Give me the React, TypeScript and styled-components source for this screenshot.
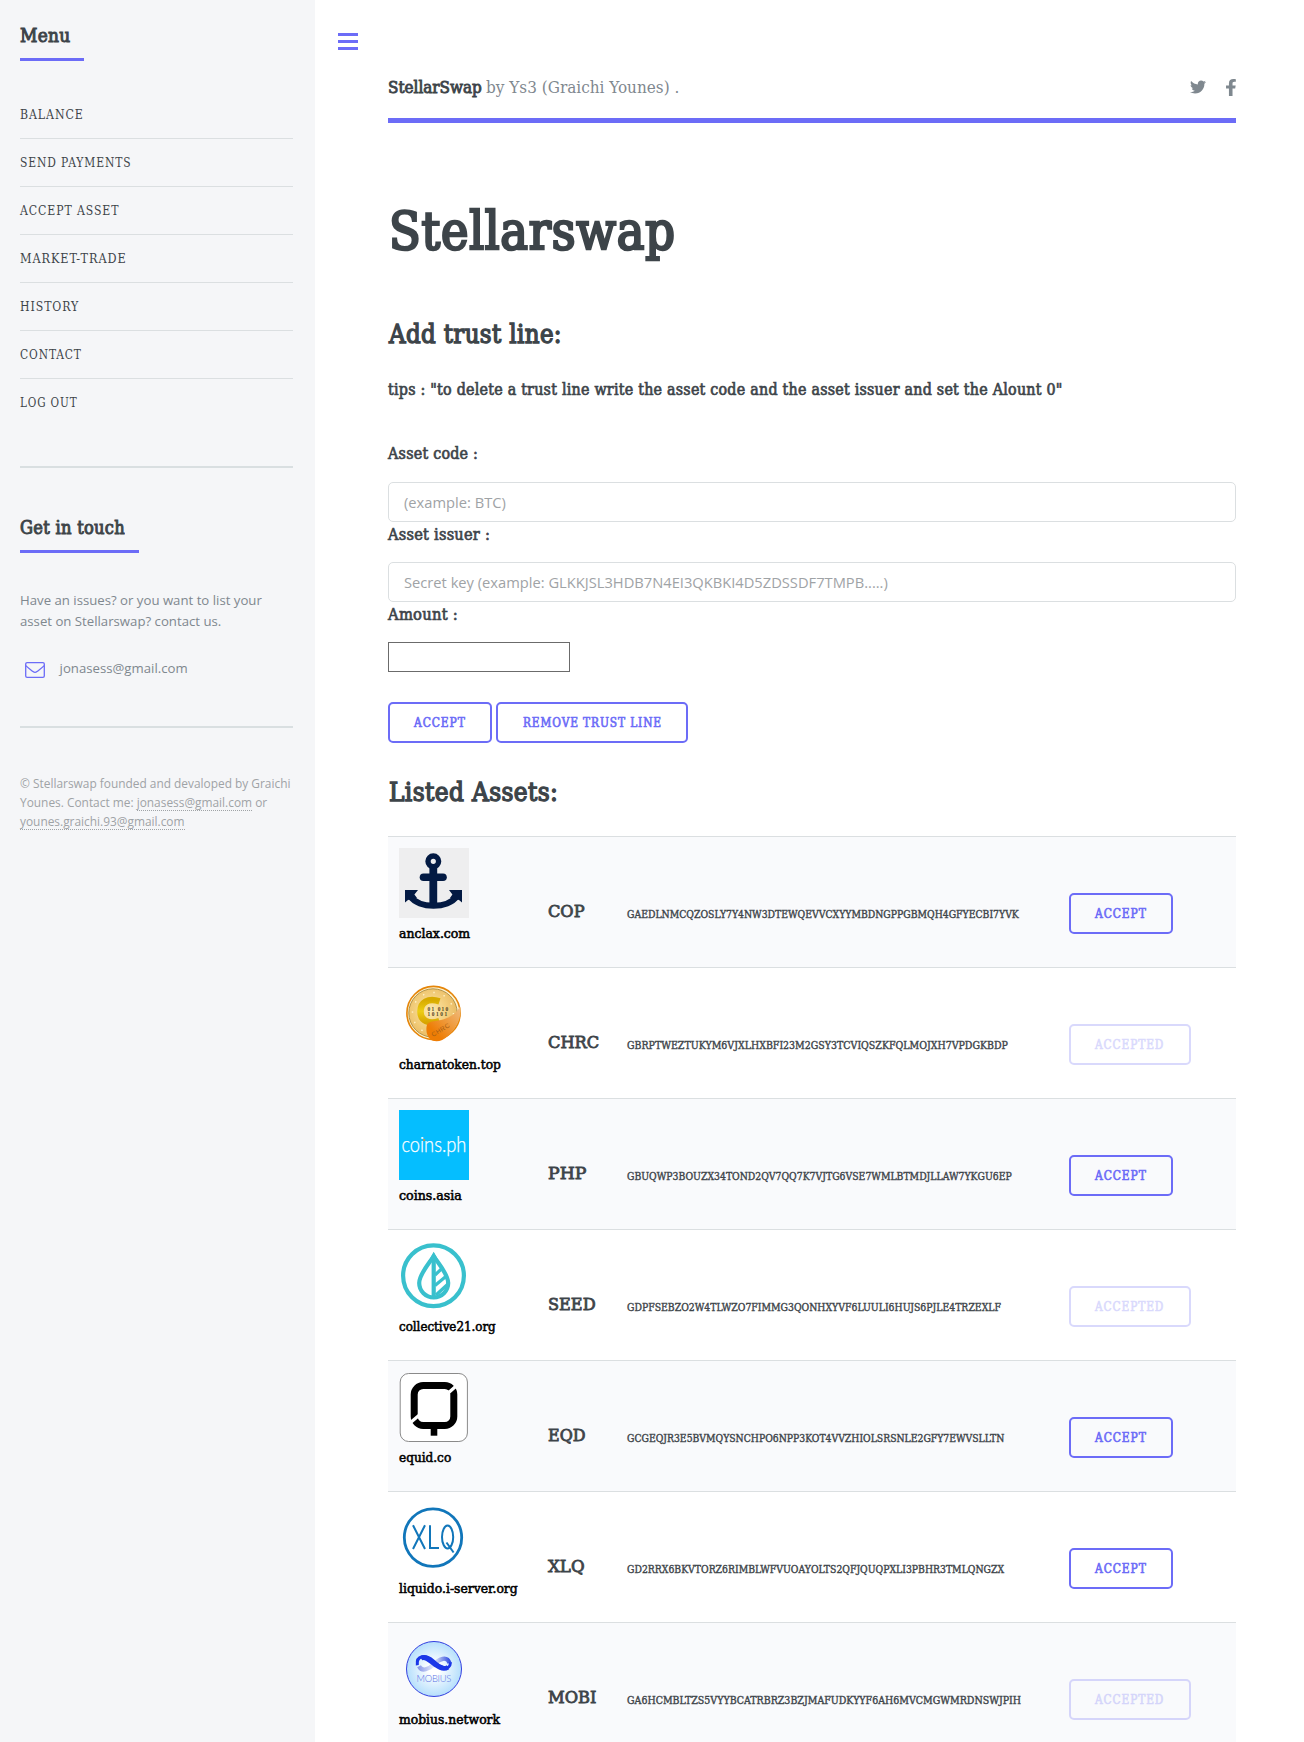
import React, { ReactNode, useLayoutEffect, useRef, useState } from 'react';
import styled, { createGlobalStyle, css } from 'styled-components';
import { FaTwitter } from 'react-icons/fa';

const accent = '#6c6cf7';
const ink = '#3d4449';
const muted = '#7f888f';
const rule = '#dbdfe1';
const slab = "'DejaVu Serif Condensed', 'DejaVu Serif', serif";
const sans = "'Open Sans', 'Noto Sans', sans-serif";

const GlobalStyle = createGlobalStyle`
  *, *::before, *::after { box-sizing: border-box; }
  body { margin: 0; background: #fff; color: ${muted}; font-family: ${sans}; overflow: hidden; }
  h1, h2, h3, p, ul { margin: 0; padding: 0; font-weight: 400; }
  h1, h2, h3, li { font-family: ${slab}; }
  h1, h2, h3 { letter-spacing: 0.015em; }
`;

/* Condenses a line of slab text so that it fills a known measure. */
const Measure = styled.span<{ $width: number; $bold?: number }>`
  display: inline-block;
  width: ${(p) => p.$width}px;
  white-space: nowrap;
  text-align: left;
  ${(p) => p.$bold && css`text-indent: 0.02em;`}
`;
const Glyphs = styled.span<{ $bold?: number }>`
  display: inline-block;
  text-indent: 0;
  transform-origin: 0 50%;
  font-family: ${slab};
  ${(p) => p.$bold && css`-webkit-text-stroke: ${p.$bold}em currentColor;`}
`;
function Fit({ width, bold, children }: { width: number; bold?: number; children: ReactNode }) {
  const ref = useRef<HTMLSpanElement>(null);
  const [scale, setScale] = useState(1);
  useLayoutEffect(() => {
    if (ref.current) setScale(width / ref.current.offsetWidth);
  }, [width]);
  return (
    <Measure $width={width} $bold={bold}>
      <Glyphs ref={ref} $bold={bold} style={{ transform: `scaleX(${scale})` }}>{children}</Glyphs>
    </Measure>
  );
}

const Page = styled.div`
  display: flex;
  height: 1742px;
  overflow: hidden;
`;

/* Sidebar */
const Sidebar = styled.aside`
  flex: 0 0 315px;
  padding: 24px 22px 0 20px;
  background: #f5f6f8;
`;
const Section = styled.section`
  & + & { border-top: 2px solid #d9dfe1; margin-top: 48px; padding-top: 48px; }
`;
const MenuSection = styled(Section)`
  margin-bottom: -8px;
`;
const SideHeading = styled.h2<{ $width: number }>`
  width: ${(p) => p.$width}px;
  height: 37px;
  border-bottom: 3px solid ${accent};
  color: ${ink};
  font-size: 17.6px;
  line-height: 24px;
`;
const Menu = styled.ul`
  list-style: none;
  margin-top: 30px;
`;
const MenuItem = styled.li`
  height: 48px;
  border-bottom: 1px solid ${rule};
  color: ${ink};
  font-size: 12.8px;
  line-height: 48px;
  letter-spacing: 0.075em;
  &:last-child { height: 47px; border-bottom: 0; }
`;
const SideText = styled.p`
  margin-top: 37px;
  font-size: 13.2px;
  line-height: 21px;
`;
const Mail = styled.div`
  display: flex;
  gap: 14.6px;
  height: 21px;
  margin-top: 25px;
  padding-left: 5px;
  font-size: 13.2px;
  line-height: 22px;
  svg { margin-top: 5px; flex: none; }
`;
const Footer = styled(Section).attrs({ as: 'footer' })`
  && { padding-top: 46px; }
  color: #9fa3a6;
  font-size: 11.9px;
  line-height: 19px;
`;
const MailLink = styled.span`
  border-bottom: 1px dotted #9fa3a6;
`;

/* Main column */
const Main = styled.main`
  position: relative;
  flex: 1;
  padding: 0 68px 0 73px;
  color: ${ink};
  font-family: ${slab};
`;
const Toggle = styled.button`
  position: absolute;
  left: 23px;
  top: 33px;
  display: grid;
  gap: 4px;
  width: 20px;
  padding: 0;
  border: 0;
  background: none;
`;
const ToggleBar = styled.i`
  height: 3px;
  background: ${accent};
`;
const TopBar = styled.header`
  display: flex;
  justify-content: space-between;
  height: 123px;
  padding-top: 74px;
  border-bottom: 5px solid ${accent};
  color: ${muted};
  font-size: 16.2px;
  line-height: 26px;
`;
const Brand = styled.span`
  display: flex;
  gap: 4px;
  padding-top: 1px;
`;
const Strong = styled.strong`
  color: ${ink};
  font-weight: 400;
`;
const Social = styled.div`
  display: flex;
  gap: 20px;
  padding-top: 5px;
`;
const Title = styled.h1`
  height: 60px;
  margin-top: 78px;
  font-size: 52px;
  line-height: 60px;
`;
const Heading = styled.h2<{ $top: number }>`
  margin-top: ${(p) => p.$top}px;
  height: 40px;
  font-size: 25.8px;
  line-height: 40px;
`;
const Tips = styled.h3`
  height: 26px;
  margin: 23px 0 38px;
  font-size: 15.8px;
  line-height: 26px;
`;
const Label = styled.h3`
  height: 40px;
  font-size: 15.8px;
  line-height: 26px;
  &:first-child { height: 41px; }
`;
const Field = styled.input`
  display: block;
  width: 100%;
  height: 40px;
  padding: 0 15px;
  border: 1px solid ${rule};
  border-radius: 5px;
  background: #fff;
  font: 14.7px ${sans};
  &::placeholder { color: #9fa3a6; opacity: 1; }
`;
const AmountField = styled.input`
  display: block;
  width: 182px;
  height: 30px;
  border: 1px solid #6b6b6b;
  background: #fff;
`;
const Form = styled.form`
  margin: 0;
`;
const Actions = styled.div`
  display: flex;
  gap: 4px;
  margin-top: 30px;
`;
const Button = styled.button<{ $width: number }>`
  width: ${(p) => p.$width}px;
  height: 41px;
  padding: 0;
  border: 2px solid ${accent};
  border-radius: 5px;
  background: transparent;
  color: ${accent};
  font: 12.4px/37px ${slab};
  letter-spacing: 0.075em;
  &:disabled { opacity: 0.25; }
`;

/* Asset table */
const Assets = styled.div`
  margin-top: 24px;
`;
const Row = styled.div`
  display: grid;
  grid-template-columns: 149px 79px 442px 1fr;
  align-items: start;
  height: 131px;
  padding: 11px 0 0 11px;
  border-top: 1px solid ${rule};
  &:nth-child(odd) { background: #f9fafc; }
`;
const Issuer = styled.div`
  display: grid;
  gap: 6px;
  color: #000;
  font-size: 12.8px;
  line-height: 20px;
  svg { display: block; overflow: visible; }
`;
const Code = styled.div`
  padding-top: 51px;
  font-size: 17px;
  line-height: 24px;
`;
const Address = styled.div`
  padding-top: 57px;
  font-size: 10.7px;
  line-height: 20px;
`;
const RowAction = styled.div`
  padding-top: 45px;
`;

const Logo = ({ children }: { children: ReactNode }) => (
  <svg width="70" height="70" viewBox="0 0 70 70">{children}</svg>
);

const AnchorLogo = () => (
  <Logo>
    <rect width="70" height="70" fill="#eeeeef" />
    <g fill="none" stroke="#031a43">
      <circle cx="34.3" cy="13.3" r="5.3" strokeWidth="5.4" />
      <path d="M34.3 18V58" strokeWidth="7.8" />
      <path d="M24.5 29.3H44" strokeWidth="7.6" strokeLinecap="round" />
      <path d="M11 48C20 61 49 61 58 48" strokeWidth="6.2" />
    </g>
    <path d="M6 42H19L15.4 46.4L18 50L9 52L6 54.5ZM63 42H50L53.4 46.4L51 50L60 52L63 54.5Z" fill="#031a43" />
  </Logo>
);

const CharnaLogo = () => (
  <Logo>
    <defs>
      <radialGradient id="gold" cx="45%" cy="45%">
        <stop offset="0" stopColor="#fdeab0" />
        <stop offset="0.65" stopColor="#f3cf7e" />
        <stop offset="1" stopColor="#ecc06a" />
      </radialGradient>
      <linearGradient id="ribbon" x1="0" x2="1" y1="1" y2="0">
        <stop offset="0.25" stopColor="#ee7d05" />
        <stop offset="1" stopColor="#f0bd80" />
      </linearGradient>
      <linearGradient id="letter" x2="0" y2="1">
        <stop offset="0" stopColor="#d8aa00" />
        <stop offset="0.5" stopColor="#eccd14" />
        <stop offset="1" stopColor="#d8a400" />
      </linearGradient>
    </defs>
    <circle cx="34.5" cy="34" r="26.6" fill="#fff4cf" stroke="#e58509" strokeWidth="1.6" />
    <circle cx="34" cy="34" r="24.2" fill="url(#gold)" stroke="#a8893e" strokeWidth="0.9" />
    <circle cx="34" cy="34" r="20.5" fill="none" stroke="#fff0c4" strokeWidth="1.5" strokeDasharray="1.5 9.2" />
    <path d="M40.5 22.4C29 18.6 21.5 23.5 21.5 32.5S30 46 40.5 42" fill="none" stroke="url(#letter)" strokeWidth="6.6" />
    <g fontFamily="Liberation Serif, serif" fontSize="5.4" fontWeight="700" fill="#4e411c">
      <text x="28.6" y="32.2" textLength="20.5">01 010</text>
      <text x="28.6" y="37.2" textLength="19.5">10101</text>
    </g>
    <path d="M27.5 48C28 42 35 42.5 42 41C51 38.5 57 35 61 27.5C63.5 41 55 51 49 57C43 62.5 36 64 31 60C28 57 27 53 27.5 48Z" fill="url(#ribbon)" />
    <text transform="translate(34 58) rotate(-31)" fontFamily="Liberation Sans, sans-serif" fontSize="6.4" fill="#a65d13" textLength="20">CHRC</text>
  </Logo>
);

const CoinsLogo = () => (
  <Logo>
    <rect width="70" height="70" fill="#05beff" />
    <text x="2.4" y="42" fontFamily="Lato, sans-serif" fontWeight="300" fontSize="20.6" fill="#fff" stroke="#fff" strokeWidth="0.25" textLength="65" lengthAdjust="spacingAndGlyphs">coins.ph</text>
    <rect x="24" y="29" width="2" height="2" fill="#a99b5e" />
  </Logo>
);

const SeedLogo = () => (
  <Logo>
    <g fill="none" stroke="#39c0cd" strokeWidth="4.2">
      <circle cx="34.5" cy="34.7" r="30.4" />
      <path d="M34.7 15C30 23 20.2 33 20.2 42A14.5 14.4 0 0 0 49.2 42C49.2 33 39.4 23 34.7 15Z" />
      <path d="M34.7 16V56" />
      <path d="M36 34L43.5 27M36 44.5L48 34.5M37 54L49 43" strokeWidth="3.2" />
    </g>
    <path d="M34.7 11.3L40 20H29.4Z" fill="#39c0cd" />
  </Logo>
);

const EquidLogo = () => (
  <Logo>
    <rect x="1.2" y="1.5" width="67.2" height="68" rx="8.5" fill="#fff" stroke="#8a8a8a" strokeWidth="1" />
    <rect x="15.2" y="13.5" width="39.6" height="40" rx="9" fill="none" stroke="#000" strokeWidth="7" />
    <path d="M47.5 22.5L60 11.5M8 53.5L21 42.5" stroke="#fff" strokeWidth="3.2" />
    <path d="M35 55V63.7" stroke="#000" strokeWidth="6.6" />
  </Logo>
);

const XlqLogo = () => (
  <Logo>
    <circle cx="34" cy="34.6" r="28.7" fill="#fff" stroke="#1176ba" strokeWidth="2.8" />
    <g fill="none" stroke="#1176ba" strokeWidth="2">
      <path d="M14 22.3L26 46M26 22.3L14 46M31 22.3V45H40" />
      <ellipse cx="48.6" cy="34" rx="5.6" ry="11.4" />
      <path d="M47.5 39.5L54.6 49.5" />
    </g>
  </Logo>
);

const MobiusLogo = () => (
  <Logo>
    <defs>
      <radialGradient id="sky">
        <stop offset="0.2" stopColor="#fff" />
        <stop offset="1" stopColor="#b5dffc" />
      </radialGradient>
      <linearGradient id="loop">
        <stop offset="0" stopColor="#8d9be8" />
        <stop offset="0.45" stopColor="#dfe7fb" />
        <stop offset="0.6" stopColor="#c0caf0" />
        <stop offset="1" stopColor="#3550e2" />
      </linearGradient>
    </defs>
    <g transform="translate(0 -0.8)">
      <circle cx="35" cy="35.8" r="27.5" fill="url(#sky)" stroke="#343fe0" strokeWidth="1" />
      <path d="M20 33C23 39 30 36 35 31S48 22 50.5 30" fill="none" stroke="url(#loop)" strokeWidth="4.2" />
      <path d="M18.3 32C17 22 27 21 34 27.5S51 39 51.5 29" fill="none" stroke="#1b37e8" strokeWidth="3" />
      <path d="M22 25C27 22 32 29 37 32C41 35 45 36.5 49 34" fill="none" stroke="#1b37e8" strokeWidth="4.6" />
      <text x="17.5" y="48.4" fontFamily="Lato, sans-serif" fontWeight="300" fontSize="9.4" fill="#5a6fe4" textLength="34.8">MOBIUS</text>
    </g>
  </Logo>
);

const MENU: [string, number][] = [
  ['BALANCE', 64], ['SEND PAYMENTS', 112], ['ACCEPT ASSET', 99.5], ['MARKET-TRADE', 106.5],
  ['HISTORY', 59], ['CONTACT', 62], ['LOG OUT', 58],
];

type Asset = {
  logo: ReactNode; site: string; siteW: number; code: string; codeW: number;
  address: string; addressW: number; accepted?: boolean;
};
const ASSETS: Asset[] = [
  { logo: <AnchorLogo />, site: 'anclax.com', siteW: 71.5, code: 'COP', codeW: 37, address: 'GAEDLNMCQZOSLY7Y4NW3DTEWQEVVCXYYMBDNGPPGBMQH4GFYECBI7YVK', addressW: 391.5 },
  { logo: <CharnaLogo />, site: 'charnatoken.top', siteW: 102, code: 'CHRC', codeW: 51, address: 'GBRPTWEZTUKYM6VJXLHXBFI23M2GSY3TCVIQSZKFQLMOJXH7VPDGKBDP', addressW: 381, accepted: true },
  { logo: <CoinsLogo />, site: 'coins.asia', siteW: 62.5, code: 'PHP', codeW: 38.5, address: 'GBUQWP3BOUZX34TOND2QV7QQ7K7VJTG6VSE7WMLBTMDJLLAW7YKGU6EP', addressW: 385 },
  { logo: <SeedLogo />, site: 'collective21.org', siteW: 97, code: 'SEED', codeW: 47.5, address: 'GDPFSEBZO2W4TLWZO7FIMMG3QONHXYVF6LUULI6HUJS6PJLE4TRZEXLF', addressW: 374, accepted: true },
  { logo: <EquidLogo />, site: 'equid.co', siteW: 52.5, code: 'EQD', codeW: 37.5, address: 'GCGEQJR3E5BVMQYSNCHPO6NPP3KOT4VVZHIOLSRSNLE2GFY7EWVSLLTN', addressW: 377 },
  { logo: <XlqLogo />, site: 'liquido.i-server.org', siteW: 118.5, code: 'XLQ', codeW: 37, address: 'GD2RRX6BKVTORZ6RIMBLWFVUOAYOLTS2QFJQUQPXLI3PBHR3TMLQNGZX', addressW: 377 },
  { logo: <MobiusLogo />, site: 'mobius.network', siteW: 101, code: 'MOBI', codeW: 49, address: 'GA6HCMBLTZS5VYYBCATRBRZ3BZJMAFUDKYYF6AH6MVCMGWMRDNSWJPIH', addressW: 394.5, accepted: true },
];

export default function App() {
  return (
    <Page>
      <GlobalStyle />
      <Sidebar>
        <MenuSection as="nav">
          <SideHeading $width={64}><Fit width={50.5} bold={0.05}>Menu</Fit></SideHeading>
          <Menu>
            {MENU.map(([label, width]) => (
              <MenuItem key={label}><Fit width={width}>{label}</Fit></MenuItem>
            ))}
          </Menu>
        </MenuSection>
        <Section>
          <SideHeading $width={119}><Fit width={105} bold={0.05}>Get in touch</Fit></SideHeading>
          <SideText>Have an issues? or you want to list your<br />asset on Stellarswap? contact us.</SideText>
          <Mail>
            <svg width="20" height="16" viewBox="0 0 20 16" fill="none" stroke={accent} strokeWidth="1.3">
              <rect x="0.7" y="0.7" width="18.6" height="14.6" rx="1.4" />
              <path d="M0.8 3.6C3 5.8 6 8 8 9.6Q10 11.2 12 9.6C14 8 17 5.8 19.2 3.6" />
            </svg>
            jonasess@gmail.com
          </Mail>
        </Section>
        <Footer>
          © Stellarswap founded and devaloped by Graichi<br />
          Younes. Contact me: <MailLink>jonasess@gmail.com</MailLink> or<br />
          <MailLink>younes.graichi.93@gmail.com</MailLink>
        </Footer>
      </Sidebar>
      <Main>
        <Toggle type="button" aria-label="Toggle"><ToggleBar /><ToggleBar /><ToggleBar /></Toggle>
        <TopBar>
          <Brand>
            <Strong><Fit width={94} bold={0.05}>StellarSwap</Fit></Strong>
            <Fit width={193}>by Ys3 (Graichi Younes) .</Fit>
          </Brand>
          <Social>
            <FaTwitter size={16} color={muted} />
            <svg width="10" height="17" viewBox="22 0 280 512" preserveAspectRatio="none" fill={muted}>
              <path d="M279.14 288l14.22-92.66h-88.91v-60.13c0-25.35 12.42-50.06 52.24-50.06h40.42V6.26S260.43 0 225.36 0c-73.22 0-121.08 44.38-121.08 124.72v70.62H22.89V288h81.39v224h100.17V288z" />
            </svg>
          </Social>
        </TopBar>
        <Title><Fit width={286.5} bold={0.048}>Stellarswap</Fit></Title>
        <Heading $top={53}><Fit width={173} bold={0.05}>Add trust line:</Fit></Heading>
        <Tips><Fit width={675} bold={0.04}>tips : "to delete a trust line write the asset code and the asset issuer and set the Alount 0"</Fit></Tips>
        <Form>
          <Label><Fit width={90.5} bold={0.04}>Asset code :</Fit></Label>
          <Field placeholder="(example: BTC)" />
          <Label><Fit width={102.5} bold={0.04}>Asset issuer :</Fit></Label>
          <Field placeholder="Secret key (example: GLKKJSL3HDB7N4EI3QKBKI4D5ZDSSDF7TMPB.....)" />
          <Label><Fit width={70.5} bold={0.04}>Amount :</Fit></Label>
          <AmountField />
          <Actions>
            <Button type="button" $width={104}><Fit width={52} bold={0.05}>ACCEPT</Fit></Button>
            <Button type="button" $width={192}><Fit width={139} bold={0.05}>REMOVE TRUST LINE</Fit></Button>
          </Actions>
        </Form>
        <Heading $top={29}><Fit width={169.5} bold={0.05}>Listed Assets:</Fit></Heading>
        <Assets>
          {ASSETS.map((a) => (
            <Row key={a.code}>
              <Issuer>{a.logo}<Fit width={a.siteW} bold={0.04}>{a.site}</Fit></Issuer>
              <Code><Fit width={a.codeW} bold={0.045}>{a.code}</Fit></Code>
              <Address><Fit width={a.addressW} bold={0.035}>{a.address}</Fit></Address>
              <RowAction>
                <Button type="button" $width={a.accepted ? 122 : 104} disabled={a.accepted}>
                  <Fit width={a.accepted ? 69.5 : 52} bold={0.05}>{a.accepted ? 'ACCEPTED' : 'ACCEPT'}</Fit>
                </Button>
              </RowAction>
            </Row>
          ))}
        </Assets>
      </Main>
    </Page>
  );
}
